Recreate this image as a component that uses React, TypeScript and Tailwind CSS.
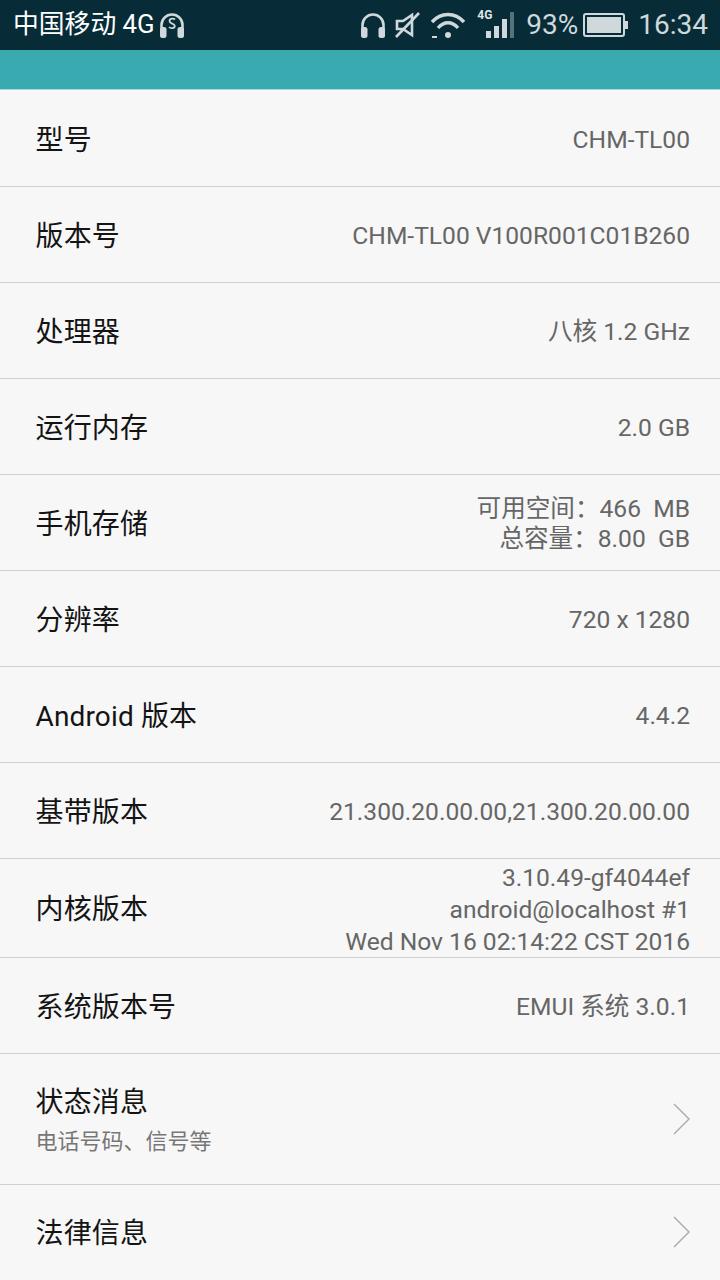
import React from "react";

const font = { fontFamily: '"Roboto","Noto Sans CJK SC",sans-serif' };

function Row({ label, value, h = "h-[96px]", sub, chevron, leading = "leading-[32px]" }: { label: string; value?: React.ReactNode; h?: string; sub?: string; chevron?: boolean; leading?: string }) {
  return (
    <div className={`${h} flex items-center justify-between pl-[35.5px] pr-[30px] pt-[4px] border-b border-[#cfcfcf] last:border-b-0`}>
      <div className="flex flex-col">
        <div className="text-[28px] leading-[36px] tracking-[0.15px] text-[#141414] whitespace-nowrap">{label}</div>
        {sub && <div className="text-[22px] leading-[30px] mt-[6px] text-[#777777]">{sub}</div>}
      </div>
      {value && <div className={`text-right text-[24.6px] ${leading} mt-[-1px] text-[#666666] whitespace-pre`}>{value}</div>}
      {chevron && (
        <svg className="mr-[-1px] mt-[-5px]" width="18" height="32" viewBox="0 0 18 32" fill="none" stroke="#a8a8a8" strokeWidth="1.4">
          <path d="M1 1 L16 16 L1 31" />
        </svg>
      )}
    </div>
  );
}

function Headset({ color = "#cfd8da", s }: { color?: string; s?: boolean }) {
  return (
    <svg width="28" height="28" viewBox="0 0 28 28" fill="none">
      <path d="M3.5 19 V14 a10.5 10.5 0 0 1 21 0 V19" stroke={color} strokeWidth="2.6" />
      <rect x="2" y="16" width="6.5" height="11" rx="2.5" fill={color} />
      <rect x="19.5" y="16" width="6.5" height="11" rx="2.5" fill={color} />
      {s && (
        <path d="M17 8.5 C15.5 7 11.5 7.2 11.5 10 C11.5 13 16.8 12.2 16.8 15 C16.8 17.6 12.6 17.8 11 16" stroke={color} strokeWidth="1.8" />
      )}
    </svg>
  );
}

export default function App() {
  return (
    <div className="w-[720px] h-[1280px] overflow-hidden bg-[#f7f7f7]" style={font}>
      <div className="h-[50px] bg-[#072c38] flex items-center justify-between pl-[13px] pr-[12px]">
        <div className="flex items-center gap-[3px] text-white text-[25.8px] leading-none">
          <span>中国移动 4G</span>
          <Headset s />
        </div>
        <div className="flex items-center text-[#cfd8da] text-[28px] leading-none">
          <Headset />
          <svg className="ml-[6px]" width="30" height="28" viewBox="0 0 30 28" fill="none" stroke="#cfd8da" strokeWidth="2.6">
            <path d="M4 10 H10 L19 4 V24 L10 18 H4 Z" />
            <path d="M3 26 L26 2" />
          </svg>
          <svg className="ml-[7px]" width="36" height="28" viewBox="0 0 36 28" fill="none" stroke="#cfd8da" strokeWidth="3.4">
            <path d="M2 11 C11 1 25 1 34 11" />
            <path d="M8 17 C14 10 22 10 28 17" />
            <circle cx="18" cy="24" r="3" fill="#cfd8da" stroke="none" />
            <path d="M2 26 H7" strokeWidth="2" />
          </svg>
          <div className="relative ml-[11px] w-[38px] h-[28px]">
            <span className="absolute left-0 top-[-2px] text-[12px] font-bold leading-none text-[#dfe5e6]">4G</span>
            <svg className="absolute left-[8px] top-0" width="30" height="28" viewBox="0 0 30 28" fill="#cfd8da">
              <rect x="1" y="20" width="5" height="7" />
              <rect x="9" y="15" width="5" height="12" />
              <rect x="17" y="8" width="5" height="19" />
              <rect x="25" y="1" width="4" height="26" fill="#55717a" />
            </svg>
          </div>
          <span className="ml-[11px]">93%</span>
          <svg className="ml-[5px]" width="46" height="24" viewBox="0 0 46 24">
            <rect x="1" y="1" width="40" height="22" rx="2" fill="none" stroke="#cfd8da" strokeWidth="2" />
            <rect x="4" y="4" width="34" height="16" fill="#cfd8da" />
            <rect x="42" y="8" width="3" height="8" fill="#cfd8da" />
          </svg>
          <span className="ml-[9px]">16:34</span>
        </div>
      </div>
      <div className="h-[40px] bg-[#39aab0] border-b border-[#9fd8d6]" />
      <div className="border-t border-[#fbf9fd]">
        <Row label="型号" value="CHM-TL00" />
        <Row label="版本号" value="CHM-TL00 V100R001C01B260" />
        <Row label="处理器" value="八核 1.2 GHz" />
        <Row label="运行内存" value="2.0 GB" />
        <Row label="手机存储" value={"可用空间：466  MB\n总容量：8.00  GB"} leading="leading-[30px]" />
        <Row label="分辨率" value="720 x 1280" />
        <Row label="Android 版本" value="4.4.2" />
        <Row label="基带版本" value="21.300.20.00.00,21.300.20.00.00" />
        <Row label="内核版本" value={"3.10.49-gf4044ef\nandroid@localhost #1\nWed Nov 16 02:14:22 CST 2016"} h="h-[99px]" />
        <Row label="系统版本号" value="EMUI 系统 3.0.1" />
        <Row label="状态消息" sub="电话号码、信号等" chevron h="h-[131px]" />
        <Row label="法律信息" chevron h="h-[94px]" />
      </div>
    </div>
  );
}
